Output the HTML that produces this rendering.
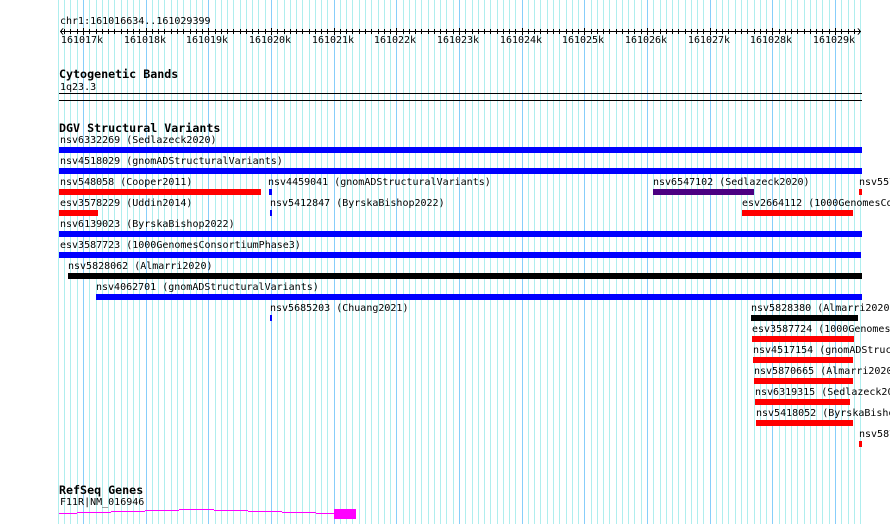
<!DOCTYPE html>
<html>
<head>
<meta charset="utf-8">
<style>
html,body{margin:0;padding:0;background:#fff;width:890px;height:524px;overflow:hidden}
svg{display:block;position:absolute;left:0;top:0}
text{font-family:"DejaVu Sans Mono",monospace;font-size:10px;fill:#000;white-space:pre}
text.b{font-weight:bold;font-size:11.67px}
rect,path{shape-rendering:crispEdges}
</style>
</head>
<body>
<svg width="890" height="524" viewBox="0 0 890 524" xmlns="http://www.w3.org/2000/svg">
<defs>
<pattern id="g" patternUnits="userSpaceOnUse" x="-11" y="0" width="94" height="524">
<path d="M0.5 0V524M6.5 0V524M13.5 0V524M19.5 0V524M25.5 0V524M31.5 0V524M38.5 0V524M44.5 0V524M50.5 0V524M56.5 0V524M63.5 0V524M69.5 0V524M75.5 0V524M81.5 0V524M88.5 0V524" stroke="#afeeee" stroke-width="1" fill="none"/>
</pattern>
<pattern id="t" patternUnits="userSpaceOnUse" x="-11" y="0" width="94" height="524">
<path d="M0.5 0V524M6.5 0V524M13.5 0V524M19.5 0V524M25.5 0V524M31.5 0V524M38.5 0V524M44.5 0V524M50.5 0V524M56.5 0V524M63.5 0V524M69.5 0V524M75.5 0V524M81.5 0V524M88.5 0V524" stroke="#000" stroke-width="1" fill="none"/>
</pattern>
</defs>

<!-- grid -->
<rect x="58" y="0" width="803" height="524" fill="url(#g)"/>
<path d="M83.5 0V524M146.5 0V524M208.5 0V524M271.5 0V524M334.5 0V524M396.5 0V524M459.5 0V524M522.5 0V524M584.5 0V524M647.5 0V524M710.5 0V524M772.5 0V524M835.5 0V524" stroke="#87cefa" stroke-width="1" fill="none"/>

<!-- ruler -->
<text x="60" y="24">chr1:161016634..161029399</text>
<rect x="60" y="31" width="801" height="1" fill="#000"/>
<rect x="64" y="29" width="795" height="5" fill="url(#t)"/>
<path d="M83.5 28V35M146.5 28V35M208.5 28V35M271.5 28V35M334.5 28V35M396.5 28V35M459.5 28V35M522.5 28V35M584.5 28V35M647.5 28V35M710.5 28V35M772.5 28V35M835.5 28V35" stroke="#000" fill="none"/>
<path d="M63 28.5L60.5 31.5L63 34.5M858 28.5L860.5 31.5L858 34.5" stroke="#000" fill="none"/>
<g text-anchor="middle">
<text x="82" y="43">161017k</text>
<text x="145" y="43">161018k</text>
<text x="207" y="43">161019k</text>
<text x="270" y="43">161020k</text>
<text x="333" y="43">161021k</text>
<text x="395" y="43">161022k</text>
<text x="458" y="43">161023k</text>
<text x="521" y="43">161024k</text>
<text x="583" y="43">161025k</text>
<text x="646" y="43">161026k</text>
<text x="709" y="43">161027k</text>
<text x="771" y="43">161028k</text>
<text x="834" y="43">161029k</text>
</g>

<!-- cytogenetic bands -->
<text class="b" x="59" y="78">Cytogenetic Bands</text>
<text x="60" y="90">1q23.3</text>
<rect x="59" y="93" width="803" height="1" fill="#000"/>
<rect x="59" y="100" width="803" height="1" fill="#000"/>

<!-- DGV -->
<text class="b" x="59" y="132">DGV Structural Variants</text>

<text x="60" y="143">nsv6332269 (Sedlazeck2020)</text>
<rect x="59" y="147" width="803" height="6" fill="#0000ff"/>

<text x="60" y="164">nsv4518029 (gnomADStructuralVariants)</text>
<rect x="59" y="168" width="803" height="6" fill="#0000ff"/>

<text x="60" y="185">nsv548058 (Cooper2011)</text>
<rect x="59" y="189" width="202" height="6" fill="#ff0000"/>
<text x="268" y="185">nsv4459041 (gnomADStructuralVariants)</text>
<rect x="269" y="189" width="3" height="6" fill="#0000ff"/>
<text x="653" y="185">nsv6547102 (Sedlazeck2020)</text>
<rect x="653" y="189" width="101" height="6" fill="#4b0082"/>
<text x="859" y="185">nsv5577</text>
<rect x="859" y="189" width="3" height="6" fill="#ff0000"/>

<text x="60" y="206">esv3578229 (Uddin2014)</text>
<rect x="59" y="210" width="39" height="6" fill="#ff0000"/>
<text x="270" y="206">nsv5412847 (ByrskaBishop2022)</text>
<rect x="270" y="210" width="2" height="6" fill="#0000ff"/>
<text x="742" y="206">esv2664112 (1000GenomesConsortiumPhase3)</text>
<rect x="742" y="210" width="111" height="6" fill="#ff0000"/>

<text x="60" y="227">nsv6139023 (ByrskaBishop2022)</text>
<rect x="59" y="231" width="803" height="6" fill="#0000ff"/>

<text x="60" y="248">esv3587723 (1000GenomesConsortiumPhase3)</text>
<rect x="59" y="252" width="802" height="6" fill="#0000ff"/>

<text x="68" y="269">nsv5828062 (Almarri2020)</text>
<rect x="68" y="273" width="794" height="6" fill="#000"/>

<text x="96" y="290">nsv4062701 (gnomADStructuralVariants)</text>
<rect x="96" y="294" width="766" height="6" fill="#0000ff"/>

<text x="270" y="311">nsv5685203 (Chuang2021)</text>
<rect x="270" y="315" width="2" height="6" fill="#0000ff"/>
<text x="751" y="311">nsv5828380 (Almarri2020)</text>
<rect x="751" y="315" width="107" height="6" fill="#000"/>

<text x="752" y="332">esv3587724 (1000GenomesConsortiumPhase3)</text>
<rect x="752" y="336" width="102" height="6" fill="#ff0000"/>

<text x="753" y="353">nsv4517154 (gnomADStructuralVariants)</text>
<rect x="753" y="357" width="100" height="6" fill="#ff0000"/>

<text x="754" y="374">nsv5870665 (Almarri2020)</text>
<rect x="754" y="378" width="99" height="6" fill="#ff0000"/>

<text x="755" y="395">nsv6319315 (Sedlazeck2020)</text>
<rect x="755" y="399" width="95" height="6" fill="#ff0000"/>

<text x="756" y="416">nsv5418052 (ByrskaBishop2022)</text>
<rect x="756" y="420" width="97" height="6" fill="#ff0000"/>

<text x="859" y="437">nsv5877</text>
<rect x="859" y="441" width="3" height="6" fill="#ff0000"/>

<!-- RefSeq -->
<text class="b" x="59" y="494">RefSeq Genes</text>
<text x="60" y="505">F11R|NM_016946</text>
<path d="M59 513.5H77M77 512.5H111M111 511.5H145M145 510.5H179M179 509.5H214M214 510.5H248M248 511.5H282M282 512.5H316M316 513.5H334" stroke="#ff00ff" fill="none"/>
<rect x="334" y="509" width="22" height="10" fill="#ff00ff"/>
</svg>
</body>
</html>
